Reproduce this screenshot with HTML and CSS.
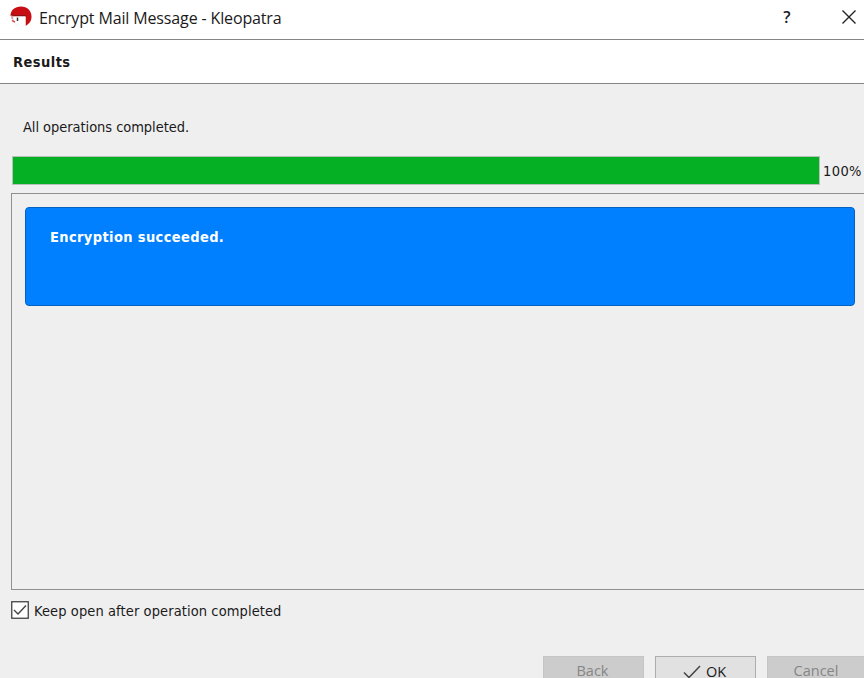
FILE: index.html
```html
<!DOCTYPE html>
<html lang="en">
<head>
<meta charset="utf-8">
<title>Encrypt Mail Message - Kleopatra</title>
<link rel="stylesheet" href="styles.css">
</head>
<body>
<div class="window">
  <header class="titlebar">
    <svg class="logo" width="22" height="22" viewBox="0 0 22 22">
      <circle cx="12" cy="11.500" r="9.500" fill="#f4eded"/>
      <path d="M.5 10C.5 4 5 .5 11 .5S21.500 4.500 21.500 10.500c0 4.500-2 7-6 9.500V10L2 9.500z" fill="#c90e13"/>
      <path d="M1 8.500l3 1.200h12" fill="none" stroke="#8c1114" stroke-width="1.500"/>
      <path d="M1 9.500l2.500.5v4L1.500 13z" fill="#d8a0a0"/>
      <path d="M3.500 10.500h12V20c-4 1.500-8 .5-10-3L3.500 15z" fill="#fff"/>
      <path d="M7.500 11.500v3.500" stroke="#34302f" stroke-width="1.500"/>
      <path d="M2 14.500l3 1.500" stroke="#d64b4e" stroke-width="1.500"/>
    </svg>
    <span class="title">Encrypt Mail Message - Kleopatra</span>
    <span class="help">?</span>
    <svg class="close" width="16" height="16" viewBox="0 0 16 16"><path d="M1.500 1.500l13 13M14.500 1.500l-13 13" stroke="#222" stroke-width="1.400"/></svg>
  </header>
  <section class="heading"><span class="results">Results</span></section>
  <main class="content">
    <div class="status"><span class="status-text">All operations completed.</span></div>
    <div class="progress"><div class="bar"></div><span class="percent">100%</span></div>
    <div class="frame"><div class="result"><span class="result-text">Encryption succeeded.</span></div></div>
    <label class="keep">
      <svg class="box" width="18" height="18" viewBox="0 0 18 18"><rect x=".75" y=".75" width="16.500" height="16.500" fill="#fff" stroke="#444" stroke-width="1.300"/><path d="M3 9l4 4 8-8.500" fill="none" stroke="#444" stroke-width="1.400"/></svg>
      <span class="keep-text">Keep open after operation completed</span>
    </label>
    <div class="buttons">
      <div class="btn off"><span class="back">Back</span></div>
      <div class="btn"><svg class="tick" width="18" height="14" viewBox="0 0 18 14"><path d="M1 7.500l5 5L17 1" fill="none" stroke="#444" stroke-width="1.500"/></svg><span class="ok">OK</span></div>
      <div class="btn off"><span class="cancel">Cancel</span></div>
    </div>
  </main>
</div>
</body>
</html>
```
FILE: styles.css
```css
* { box-sizing: border-box; }
body { margin: 0; overflow: hidden; background: #efefef; color: #1a1a1a; font: 14.500px/20px "DejaVu Sans Condensed", "DejaVu Sans", sans-serif; }
.window { width: 864px; height: 678px; overflow: hidden; }
span { white-space: nowrap; }
svg { display: block; flex: none; }
.titlebar { height: 40px; display: flex; align-items: flex-start; background: #fff; border-bottom: 1px solid #858585; padding: 6px 7px 0 10px; }
.title { margin: 2px 0 0 7px; flex: 1; font: 16px/20px "Open Sans", sans-serif; letter-spacing: -0.140px; }
.help { width: 12px; margin: 1px 48px 0 0; text-align: center; font: 600 16px/20px "Open Sans", sans-serif; }
.close { margin-top: 3px; }
.heading { height: 44px; padding: 12px 0 0 13px; background: #fff; border-bottom: 1px solid #858585; }
.results, .result-text { font-weight: bold; }
.results { letter-spacing: 0.450px; }
.result-text { letter-spacing: 0.370px; }
.content { padding-left: 11px; }
.status { height: 72px; padding: 33px 0 0 12px; }
.status-text { letter-spacing: -0.050px; }
.progress { display: flex; height: 29px; }
.bar { width: 808px; margin-left: 1px; border: 1px solid #b9bfb9; background: #06b025; }
.percent { margin: 5px 0 0 3px; letter-spacing: 0.400px; }
.frame { width: 870px; height: 397px; margin-top: 8px; padding: 13px; border: 1px solid #909090; }
.result { width: 830px; height: 99px; padding: 19px 0 0 24px; border: 1px solid #0562c4; border-radius: 4px; background: #007fff; color: #fff; }
.keep { display: flex; margin-top: 11px; height: 18px; }
.keep-text { margin: 0 0 0 5px; letter-spacing: 0.100px; }
.buttons { display: flex; gap: 11px; margin: 37px 0 0 532px; width: 330px; }
.btn { flex: none; width: 101px; height: 32px; display: flex; justify-content: center; padding-top: 4px; border: 1px solid #adadad; background: #e1e1e1; font: 14.500px/20px "Open Sans", sans-serif; }
.btn.off { width: 101px; border-color: #c5c5c5; background: #ccc; color: #868686; }
.back { margin-right: 2px; }
.cancel { margin-right: 3px; }
.ok { margin-top: 1px; }
.tick { margin: 4px 5px 0 -2px; }
```
